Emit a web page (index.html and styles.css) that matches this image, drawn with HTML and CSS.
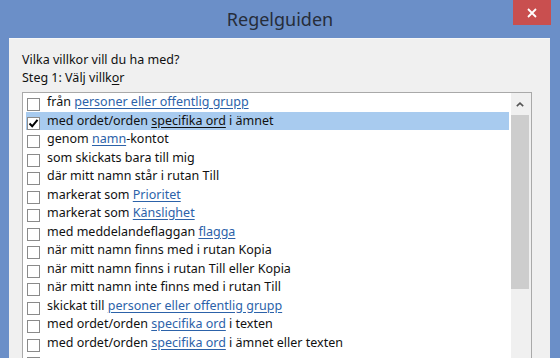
FILE: index.html
```html
<!DOCTYPE html>
<html lang="sv">
<head>
<meta charset="utf-8">
<title>Regelguiden</title>
<link rel="stylesheet" href="styles.css">
</head>
<body>
<div class="window">
  <div class="titlebar">
    <span class="spacer"></span>
    <span class="title">Regelguiden</span>
    <button class="close" aria-label="Stäng">
      <svg width="10" height="10" viewBox="0 0 10 10"><path d="M1 1 L9 9 M9 1 L1 9" stroke="#fff" stroke-width="1.8" fill="none"/></svg>
    </button>
  </div>
  <div class="client">
    <p class="question">Vilka villkor vill du ha med?</p>
    <p class="step">Steg 1: Välj villk<u>o</u>r</p>
    <div class="listbox">
      <ul class="items">
        <li class="item"><span class="cb"></span><span class="label">från <a class="link">personer eller offentlig grupp</a></span></li>
        <li class="item selected"><span class="cb"><svg width="11" height="11" viewBox="0 0 11 11"><path d="M1.5 5.5 L4.2 8.3 L9.5 1.8" stroke="#000" stroke-width="2" fill="none"/></svg></span><span class="label">med ordet/orden <a class="link">specifika ord</a> i ämnet</span></li>
        <li class="item"><span class="cb"></span><span class="label">genom <a class="link">namn</a>-kontot</span></li>
        <li class="item"><span class="cb"></span><span class="label">som skickats bara till mig</span></li>
        <li class="item"><span class="cb"></span><span class="label">där mitt namn står i rutan Till</span></li>
        <li class="item"><span class="cb"></span><span class="label">markerat som <a class="link">Prioritet</a></span></li>
        <li class="item"><span class="cb"></span><span class="label">markerat som <a class="link">Känslighet</a></span></li>
        <li class="item"><span class="cb"></span><span class="label">med meddelandeflaggan <a class="link">flagga</a></span></li>
        <li class="item"><span class="cb"></span><span class="label">när mitt namn finns med i rutan Kopia</span></li>
        <li class="item"><span class="cb"></span><span class="label">när mitt namn finns i rutan Till eller Kopia</span></li>
        <li class="item"><span class="cb"></span><span class="label">när mitt namn inte finns med i rutan Till</span></li>
        <li class="item"><span class="cb"></span><span class="label">skickat till <a class="link">personer eller offentlig grupp</a></span></li>
        <li class="item"><span class="cb"></span><span class="label">med ordet/orden <a class="link">specifika ord</a> i texten</span></li>
        <li class="item"><span class="cb"></span><span class="label">med ordet/orden <a class="link">specifika ord</a> i ämnet eller texten</span></li>
        <li class="item"><span class="cb"></span></li>
      </ul>
      <div class="scrollbar">
        <div class="arrow">
          <svg width="8" height="5" viewBox="0 0 8 5"><path d="M0.8 4.2 L4 1.2 L7.2 4.2" stroke="#555" stroke-width="1.6" fill="none"/></svg>
        </div>
        <div class="thumb"></div>
      </div>
    </div>
  </div>
</div>
</body>
</html>
```
FILE: styles.css
```css
html, body {
  margin: 0;
  padding: 0;
  overflow: hidden;
}
body {
  background: #6b8fc8;
  font-family: "Noto Sans", "Open Sans", sans-serif;
}
.window {
  width: 560px;
  height: 358px;
  display: flex;
  flex-direction: column;
  background: #6b8fc8;
  overflow: hidden;
}
.titlebar {
  height: 38px;
  flex: none;
  display: grid;
  grid-template-columns: 1fr auto 1fr;
  align-items: center;
}
.title {
  font-size: 18px;
  color: #262d3a;
}
.close {
  justify-self: end;
  align-self: start;
  margin: 0 9px 0 0;
  width: 38px;
  height: 25px;
  border: none;
  padding: 0;
  background: #c94f4f;
  display: flex;
  align-items: center;
  justify-content: center;
}
.client {
  flex: 1;
  margin: 0 10px 0 9px;
  background: #f0f0f0;
  border-top: 1px solid #f7f7f7;
  padding: 12px 18px 0 13px;
  overflow: hidden;
  font-size: 12.5px;
  color: #111;
}
.question, .step {
  margin: 0;
  line-height: 18px;
}
.step {
  margin-bottom: 5px;
}
.step u {
  text-decoration-thickness: 1px;
  text-underline-offset: 2px;
}
.listbox {
  display: flex;
  height: 300px;
  border: 1px solid #a9a9a9;
  background: #fff;
}
.items {
  list-style: none;
  margin: 0;
  padding: 0 2px 0 3px;
  flex: 1;
}
.item {
  display: flex;
  align-items: flex-start;
  height: 18.5px;
  line-height: 18.5px;
  white-space: nowrap;
}
.item.selected {
  background: #a8cbef;
}
.cb {
  flex: none;
  width: 11px;
  height: 11px;
  margin: 5px 7px 0 1px;
  border: 1px solid #8a8a8a;
  background: #fff;
  display: flex;
}
.link {
  color: #2c62a9;
  text-decoration: underline;
  text-underline-offset: 2px;
}
.selected .link {
  color: #111;
}
.scrollbar {
  flex: none;
  width: 20px;
  background: #f0f0f0;
  display: flex;
  flex-direction: column;
}
.arrow {
  height: 22px;
  display: flex;
  align-items: center;
  justify-content: center;
  padding-right: 2px;
}
.thumb {
  height: 174px;
  margin-right: 2px;
  background: #cdcdcd;
}
```
